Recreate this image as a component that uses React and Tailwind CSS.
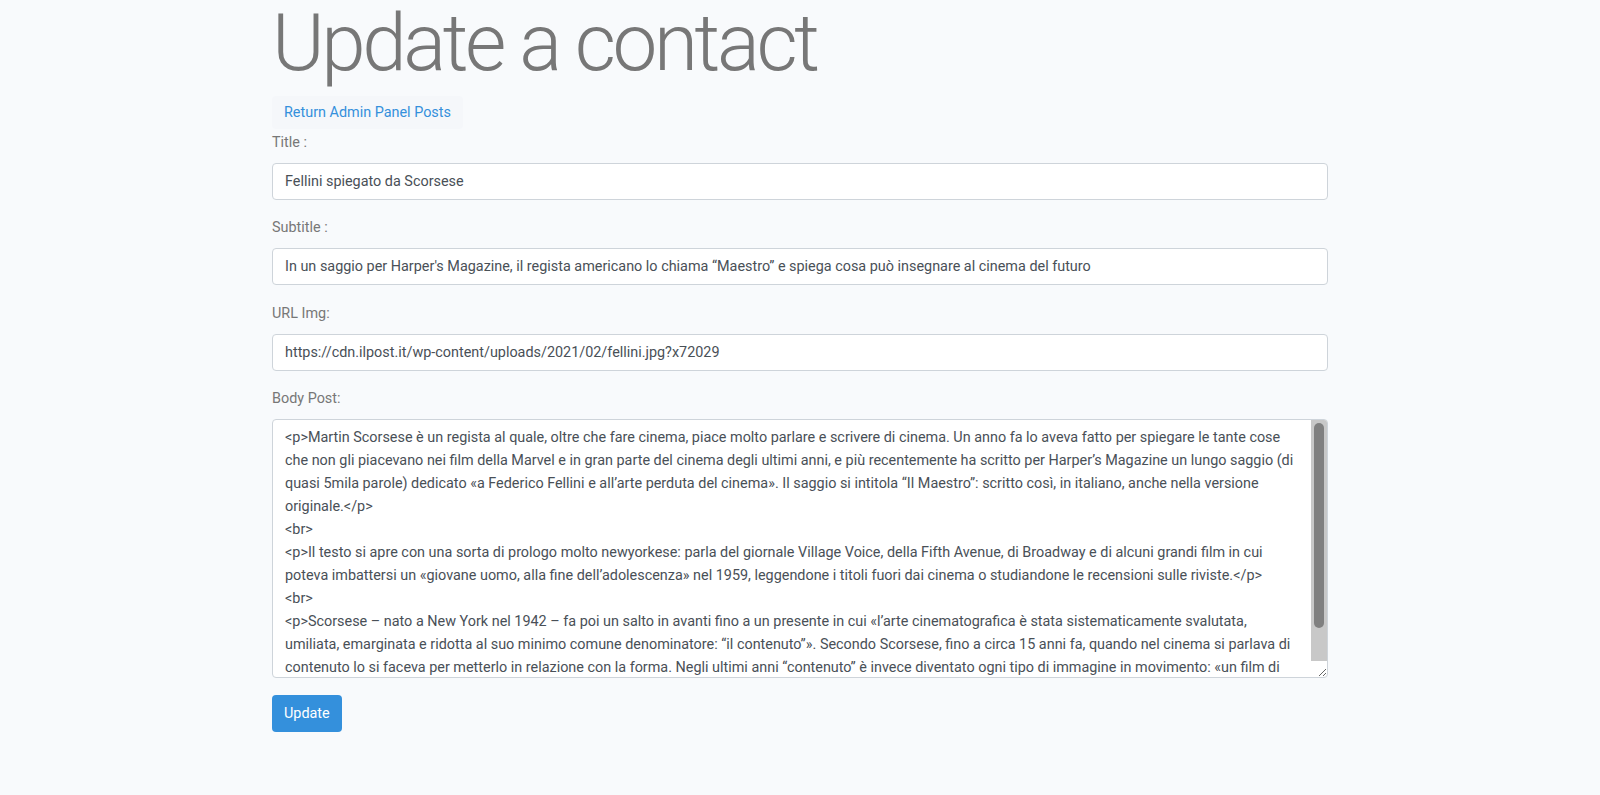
import React from "react";

const body = `<p>Martin Scorsese è un regista al quale, oltre che fare cinema, piace molto parlare e scrivere di cinema. Un anno fa lo aveva fatto per spiegare le tante cose che non gli piacevano nei film della Marvel e in gran parte del cinema degli ultimi anni, e più recentemente ha scritto per Harper’s Magazine un lungo saggio (di quasi 5mila parole) dedicato «a Federico Fellini e all’arte perduta del cinema». Il saggio si intitola “Il Maestro”: scritto così, in italiano, anche nella versione originale.</p>
<br>
<p>Il testo si apre con una sorta di prologo molto newyorkese: parla del giornale Village Voice, della Fifth Avenue, di Broadway e di alcuni grandi film in cui poteva imbattersi un «giovane uomo, alla fine dell’adolescenza» nel 1959, leggendone i titoli fuori dai cinema o studiandone le recensioni sulle riviste.</p>
<br>
<p>Scorsese – nato a New York nel 1942 – fa poi un salto in avanti fino a un presente in cui «l’arte cinematografica è stata sistematicamente svalutata, umiliata, emarginata e ridotta al suo minimo comune denominatore: “il contenuto”». Secondo Scorsese, fino a circa 15 anni fa, quando nel cinema si parlava di contenuto lo si faceva per metterlo in relazione con la forma. Negli ultimi anni “contenuto” è invece diventato ogni tipo di immagine in movimento: «un film di David Lean, un video di gatti, una pubblicità del Super Bowl, il sequel di un film di supereroi, un episodio di una serie».</p>`;

function Field({ label, value }) {
  return (
    <div className="mb-[16.3px]">
      <label className="block leading-[23px] mb-[9px] text-[#777]">{label}</label>
      <input
        type="text"
        defaultValue={value}
        className="block w-full h-[37px] px-3 bg-white border border-[#ced4da] rounded-[4px] text-[#495057] leading-[23px] outline-none"
      />
    </div>
  );
}

export default function App() {
  return (
    <div className="min-h-screen bg-[#f8fafc] font-['Roboto',sans-serif] text-[14.4px]">
      <div className="w-[1056px] mx-auto">
        <h1 className="text-[80px] leading-[86px] font-light tracking-[-3.4px] text-[#777] mb-[10px]">Update a contact</h1>

        <a href="#" className="inline-block px-3 py-[5px] leading-[23px] rounded-[4px] bg-[#f5f7fa] text-[#3490dc]">
          Return Admin Panel Posts
        </a>

        <form className="mt-[2px]" onSubmit={(e) => e.preventDefault()}>
          <Field label="Title :" value="Fellini spiegato da Scorsese" />
          <Field
            label="Subtitle :"
            value="In un saggio per Harper's Magazine, il regista americano lo chiama “Maestro” e spiega cosa può insegnare al cinema del futuro"
          />
          <Field label="URL Img:" value="https://cdn.ilpost.it/wp-content/uploads/2021/02/fellini.jpg?x72029" />

          <div className="mb-[17px]">
            <label className="block leading-[23px] mb-[9px] text-[#777]">Body Post:</label>
            <div className="relative">
              <textarea
                defaultValue={body}
                className="block w-full h-[259px] pl-3 pr-[28px] py-[6px] bg-white border border-[#ced4da] rounded-[4px] text-[#495057] leading-[23px] outline-none overflow-hidden"
              />
              {/* scrollbar */}
              <div className="absolute right-[1px] top-[1px] bottom-[17px] w-[16px] bg-[#c8c8c8] rounded-tr-[3px] pointer-events-none">
                <div className="mx-[3px] mt-[3px] h-[205px] rounded-full bg-[#808080]" />
              </div>
            </div>
          </div>

          <button type="submit" className="h-[37px] px-3 rounded-[4px] bg-[#3490dc] text-white leading-[23px]">
            Update
          </button>
        </form>
      </div>
    </div>
  );
}
